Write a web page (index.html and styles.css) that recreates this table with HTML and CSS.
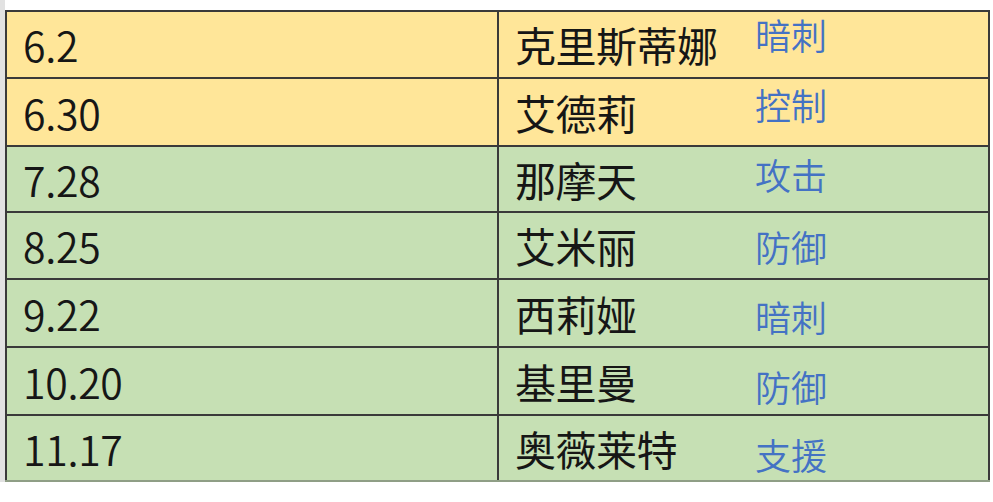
FILE: index.html
```html
<!DOCTYPE html>
<html lang="zh-CN">
<head>
<meta charset="utf-8">
<title>表格</title>
<link rel="stylesheet" href="styles.css">
</head>
<body>
<div class="page">
  <div class="gutter"></div>
  <div class="main">
    <div class="sheet">
      <div class="cell date yellow">6.2</div>
      <div class="cell hero yellow"><span class="name">克里斯蒂娜</span><span class="tag">暗刺</span></div>
      <div class="cell date yellow">6.30</div>
      <div class="cell hero yellow"><span class="name">艾德莉</span><span class="tag">控制</span></div>
      <div class="cell date green">7.28</div>
      <div class="cell hero green"><span class="name">那摩天</span><span class="tag">攻击</span></div>
      <div class="cell date green">8.25</div>
      <div class="cell hero green"><span class="name">艾米丽</span><span class="tag">防御</span></div>
      <div class="cell date green">9.22</div>
      <div class="cell hero green"><span class="name">西莉娅</span><span class="tag">暗刺</span></div>
      <div class="cell date green">10.20</div>
      <div class="cell hero green"><span class="name">基里曼</span><span class="tag">防御</span></div>
      <div class="cell date green">11.17</div>
      <div class="cell hero green"><span class="name">奥薇莱特</span><span class="tag">支援</span></div>
    </div>
  </div>
</div>
</body>
</html>
```
FILE: styles.css
```css
html, body {
  margin: 0;
  padding: 0;
  background: #ffffff;
}

.page {
  width: 993px;
  display: flex;
  align-items: stretch;
  font-family: "Noto Sans CJK SC", "Noto Sans", sans-serif;
}

.gutter {
  width: 5px;
  flex: none;
  background: #e2e2e2;
}

.main {
  padding-top: 10px;
}

.sheet {
  width: 985px;
  box-sizing: border-box;
  padding: 2px 2px 0 2px;
  border-bottom: 2px solid #8f9e86;
  background: #3a3a3a;
  display: grid;
  grid-template-columns: 490px 489px;
  grid-template-rows: 65px 66px 64px 65px 66px 66px 64px;
  gap: 2px;
}

.cell {
  display: flex;
  align-items: center;
  font-size: 41px;
  line-height: 1;
  color: #161616;
}

.yellow { background: #ffe699; }
.green { background: #c6e0b4; }

.date {
  padding-left: 16px;
  font-weight: 350;
  letter-spacing: -0.3px;
}

.hero {
  padding-left: 16px;
}

.name {
  width: 240px;
  flex: none;
  letter-spacing: -0.5px;
}

.tag {
  align-self: flex-start;
  font-size: 36px;
  line-height: 1;
  font-weight: 350;
  color: #4472c4;
  letter-spacing: 0;
}

.sheet .hero:nth-child(2) .tag { margin-top: 4px; }
.sheet .hero:nth-child(4) .tag { margin-top: 7px; }
.sheet .hero:nth-child(6) .tag { margin-top: 9px; }
.sheet .hero:nth-child(8) .tag { margin-top: 15px; }
.sheet .hero:nth-child(10) .tag { margin-top: 18px; }
.sheet .hero:nth-child(12) .tag { margin-top: 20px; }
.sheet .hero:nth-child(14) .tag { margin-top: 20px; }
```
